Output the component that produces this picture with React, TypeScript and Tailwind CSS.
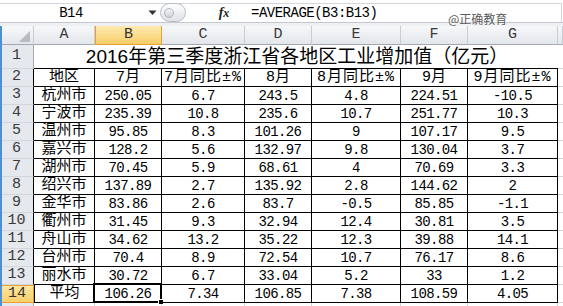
import React from 'react';

const cols = ['A', 'B', 'C', 'D', 'E', 'F', 'G'];

const headers = ['地区', '7月', '7月同比±%', '8月', '8月同比±%', '9月', '9月同比±%'];

const rows: string[][] = [
  ['杭州市', '250.05', '6.7', '243.5', '4.8', '224.51', '-10.5'],
  ['宁波市', '235.39', '10.8', '235.6', '10.7', '251.77', '10.3'],
  ['温州市', '95.85', '8.3', '101.26', '9', '107.17', '9.5'],
  ['嘉兴市', '128.2', '5.6', '132.97', '9.8', '130.04', '3.7'],
  ['湖州市', '70.45', '5.9', '68.61', '4', '70.69', '3.3'],
  ['绍兴市', '137.89', '2.7', '135.92', '2.8', '144.62', '2'],
  ['金华市', '83.86', '2.6', '83.7', '-0.5', '85.85', '-1.1'],
  ['衢州市', '31.45', '9.3', '32.94', '12.4', '30.81', '3.5'],
  ['舟山市', '34.62', '13.2', '35.22', '12.3', '39.88', '14.1'],
  ['台州市', '70.4', '8.9', '72.54', '10.7', '76.17', '8.6'],
  ['丽水市', '30.72', '6.7', '33.04', '5.2', '33', '1.2'],
  ['平均', '106.26', '7.34', '106.85', '7.38', '108.59', '4.05'],
];

const mono = "font-['Liberation_Mono','Noto_Sans_CJK_SC',monospace]";

function ColHeader({ label, selected }: { label: string; selected?: boolean }) {
  return (
    <div
      className={
        selected
          ? `flex items-center justify-center border-x border-b border-[#e2a236] bg-linear-to-b from-[#fdebb0] to-[#f8cd68] text-[15px] text-[#333] ${mono}`
          : `flex items-center justify-center border-r border-b border-r-[#c8cdd3] border-b-[#a3a9b0] bg-linear-to-b from-[#f7f8fa] to-[#e3e6ea] text-[15px] text-[#3a3a3a] ${mono}`
      }
    >
      {label}
    </div>
  );
}

function RowHeader({ n, dark, selected }: { n: string; dark?: boolean; selected?: boolean }) {
  if (selected) {
    return (
      <div
        className={`flex items-center justify-center border border-[#e2a236] bg-linear-to-b from-[#fde5a0] to-[#f9cf68] text-[15px] text-[#333] ${mono}`}
      >
        {n}
      </div>
    );
  }
  return (
    <div
      className={`flex items-center justify-center border-b border-r border-b-[#d3d7dc] bg-[#e5e8ec] text-[15px] text-[#3a3a3a] ${mono} ${
        dark ? 'border-r-black' : 'border-r-[#a3a9b0]'
      }`}
    >
      {n}
    </div>
  );
}

export default function App() {
  return (
    <div className="relative h-[306px] w-[563px] overflow-hidden bg-white">
      {/* formula bar */}
      <div className="h-[3px] bg-white" />
      <div className="flex h-[19px] w-[562px] border-t border-r border-[#d3d7dc] bg-white">
        <div className="relative flex w-[160px] items-center">
          <span className={`w-[142px] text-center text-[14px] tracking-[-0.5px] text-black ${mono}`}>B14</span>
          <svg className="absolute left-[148px] top-[6px]" width="9" height="6" viewBox="0 0 9 6">
            <path d="M0.5 0.5 L8.5 0.5 L4.5 5 Z" fill="#333" />
          </svg>
        </div>
        <div className="mt-[-1px] flex h-[19px] w-[26px] items-center rounded-full border border-[#b8bdc4] bg-linear-to-b from-white to-[#dde1e6] pl-[3px]">
          <div className="h-[10px] w-[10px] rounded-full border border-[#b0b5bc] bg-linear-to-b from-[#f4f5f7] to-[#cfd3d8]" />
        </div>
        <div className="flex w-[64px] items-center justify-center pl-[12px]">
          <span className="font-['Liberation_Serif',serif] text-[14px] font-bold italic leading-none text-[#222]">
            f<span className="text-[12px]">x</span>
          </span>
        </div>
        <div className={`flex items-center pl-[1px] text-[14px] tracking-[-0.5px] text-black ${mono}`}>
          =AVERAGE(B3:B13)
        </div>
      </div>
      <div className="h-[4px] border-t border-[#c3c8ce] bg-[#eef0f3]" />

      {/* watermark */}
      <div className="absolute left-[448px] top-[13px] font-['Noto_Sans_CJK_SC',sans-serif] text-[12px] leading-none text-[#5a5a5a] [text-shadow:0_0_2px_#fff,0_0_2px_#fff]">
        @正确教育
      </div>

      {/* sheet */}
      <div className="grid grid-cols-[34px_61px_67px_83px_67px_89px_67px_90px_1fr] grid-rows-[19px_24px_repeat(13,18px)_1fr] h-[280px]">
        {/* column headers */}
        <div className="relative border-r border-b border-r-[#c8cdd3] border-b-[#a3a9b0] bg-linear-to-b from-[#f7f8fa] to-[#e3e6ea]">
          <svg className="absolute left-[19px] top-[5px]" width="11" height="11" viewBox="0 0 11 11">
            <path d="M11 0 L11 11 L0 11 Z" fill="#b8bcc2" />
          </svg>
        </div>
        {cols.map((c) => (
          <ColHeader key={c} label={c} selected={c === 'B'} />
        ))}
        <ColHeader label="" />

        {/* row 1: title */}
        <RowHeader n="1" />
        <div className="col-span-7 flex items-center justify-center border-b border-black pl-[2px] font-['Liberation_Sans','Noto_Sans_CJK_SC',sans-serif] text-[19px] leading-none text-black">
          2016年第三季度浙江省各地区工业增加值（亿元）
        </div>
        <div className="border-b border-[#d4d4d4]" />

        {/* row 2: headers */}
        <RowHeader n="2" dark />
        {headers.map((h, i) => (
          <div
            key={h + i}
            className={`flex items-center justify-center border-r border-b border-black text-[15px] leading-none text-black ${mono} ${
              h.includes('±') ? 'tracking-[1px]' : ''
            }`}
          >
            {h}
          </div>
        ))}
        <div className="border-b border-[#d4d4d4]" />

        {/* data rows */}
        {rows.map((r, ri) => {
          const n = String(ri + 3);
          const last = ri === rows.length - 1;
          return (
            <React.Fragment key={n}>
              <RowHeader n={n} dark={!last} selected={last} />
              {r.map((v, ci) => (
                <div
                  key={ci}
                  className={`relative flex items-center justify-center border-r border-b border-black leading-none text-black ${mono} ${
                    ci === 0 ? 'text-[15px]' : 'text-[14px] tracking-[-0.6px]'
                  } ${last && ci === 0 ? 'border-l' : ''}`}
                >
                  {v}
                  {last && ci === 1 && (
                    <>
                      <div className="pointer-events-none absolute -left-[2px] -top-[2px] h-[20px] w-[69px] border-2 border-black" />
                      <div className="absolute -bottom-[3px] -right-[3px] h-[6px] w-[6px] border border-white bg-black" />
                    </>
                  )}
                </div>
              ))}
              <div className="border-b border-[#d4d4d4]" />
            </React.Fragment>
          );
        })}

        {/* row 15 (only its top edge is visible) */}
        <div className="border-r border-r-[#a3a9b0] bg-[#e5e8ec]" />
        {cols.map((c) => (
          <div key={c} className="border-r border-[#d4d4d4]" />
        ))}
        <div />
      </div>

      {/* window edge */}
      <div className="absolute left-0 top-[26px] h-[280px] w-[2px] bg-[#4d8fd1]" />
    </div>
  );
}
